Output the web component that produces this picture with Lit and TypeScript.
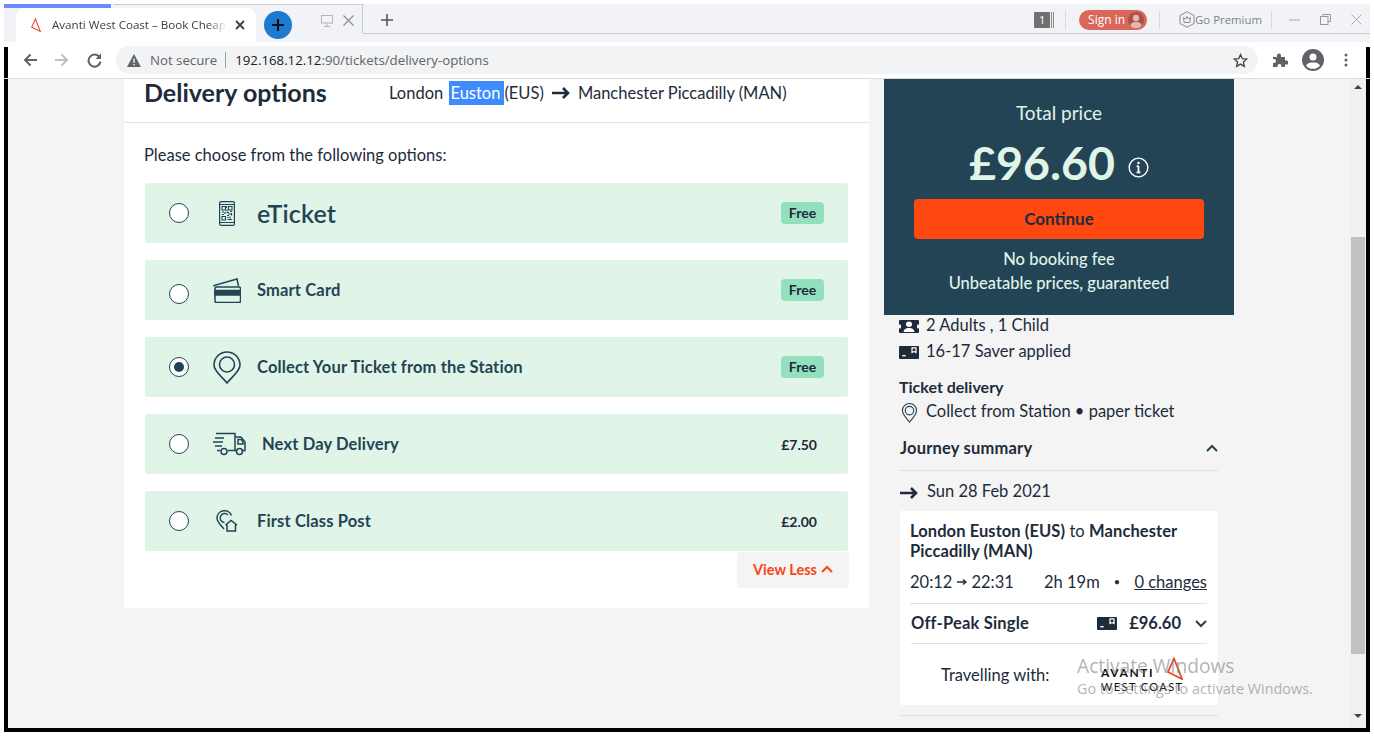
import { LitElement, css, html } from 'lit';
import { customElement } from 'lit/decorators.js';

const triangle = (w: number, h: number) => html`<svg width=${w} height=${h} viewBox="0 0 16 23" fill="none" stroke="#e5492f" stroke-width="1.8"><path d="M7 1.5L15 22L1 15Z" /></svg>`;

const chevron = (up: boolean, color: string) => html`<svg width="12" height="8" viewBox="0 0 12 8" fill="none" stroke=${color} stroke-width="2"><path d=${up ? 'M1 7L6 2L11 7' : 'M1 1L6 6L11 1'} /></svg>`;

const arrow = html`<svg width="18" height="12" viewBox="0 0 18 12" fill="none" stroke="#1d2b3a" stroke-width="2.6"><path d="M0 6H16M11 1L16 6L11 11" /></svg>`;

const adultsIcon = html`<svg width="20" height="13" viewBox="0 0 20 14" preserveAspectRatio="none"><rect width="20" height="14" rx="1" fill="#1d2b3a" /><circle cx="10" cy="4.5" r="3" fill="#fff" /><path d="M4.5 13C5 9.5 7 8.5 10 8.5S15 9.5 15.5 13Z" fill="#fff" /><rect x="0" y="5" width="2" height="4" fill="#f4f4f4" /><rect x="18" y="5" width="2" height="4" fill="#f4f4f4" /></svg>`;

const saverIcon = html`<svg width="20" height="13" viewBox="0 0 20 14" preserveAspectRatio="none"><rect width="20" height="14" rx="1" fill="#1d2b3a" /><path d="M13 2H17V7L15 6L13 7Z" fill="none" stroke="#fff" stroke-width="1.2" /><path d="M3 10.5H7M5 9.5V11.5" stroke="#fff" stroke-width="1" /></svg>`;

const pinSmall = html`<svg width="17" height="21" viewBox="0 0 18 22" fill="none" stroke="#224455" stroke-width="1.2"><path d="M9 21C6 17 1.5 13.5 1.5 9a7.5 7.5 0 0 1 15 0C16.5 13.5 12 17 9 21Z" /><circle cx="9" cy="9" r="4.5" /></svg>`;

const phoneIcon = html`<svg width="16" height="25" viewBox="0 0 16 25" fill="none" stroke="#224455"><rect x=".6" y=".6" width="14.8" height="23.8" rx="1.5" stroke-width="1.2" /><path d="M1 3.5H15M1 21.5H15" stroke-width="1" /><path d="M3 5.5H6.5V9H3ZM9.5 5.5H13V9H9.5ZM3 15.5H6.5V19H3Z" stroke-width="1.1" /><path d="M7.5 5V7M8 8.5V10.5M3 11H5M6 11V13M3 13.5H5M7.5 11.5H10M11 10.5H13M9 13H12M12.5 12V14.5M8 14.5H10M8 16.5H9.5M11 15.5V17.5M8.5 18.5H13" stroke-width="1.2" /></svg>`;

const cardIcon = html`<svg width="28" height="25" viewBox="0 0 28 25" fill="none" stroke="#224455" stroke-width="1.5"><path d="M1 8.5L1 7.5L24 1L25.5 8" /><rect x="2" y="9" width="25.5" height="15.5" rx="1.5" /><rect x="2" y="12.5" width="25.5" height="4.5" fill="#224455" /></svg>`;

const pinIcon = html`<svg width="28" height="33" viewBox="0 0 28 33" fill="none" stroke="#224455" stroke-width="1.6"><path d="M14 32C9.5 26 1 20.5 1 14a13 13 0 0 1 26 0C27 20.5 18.5 26 14 32Z" /><circle cx="14" cy="13.5" r="7.5" /></svg>`;

const truckIcon = html`<svg width="33" height="24" viewBox="0 0 33 24" fill="none" stroke="#224455" stroke-width="1.5"><path d="M3 1.5H22V18.5H15M7 18.5H4M22 5H28L32 10V18.5H28.5M22 18.5H24" /><path d="M25 7.5H28.5L30 10V12H25Z" /><circle cx="11" cy="19.5" r="3" /><circle cx="26.5" cy="19.5" r="3" /><path d="M2 6H11M0 10H10M2 14H9" /></svg>`;

const postIcon = html`<svg width="22" height="22" viewBox="0 0 22 22" fill="none" stroke="#224455" stroke-width="1.5"><path d="M8 19C5 15.5 1 12 1 8a7.5 7.5 0 0 1 14.5-2.5" /><path d="M8.5 12.5A4.5 4.5 0 1 1 12 5" /><path d="M9.5 15L15 10.5L21 15M11 14V21H19.5V14" /></svg>`;

const options = [
    { name: 'eTicket', icon: phoneIcon, price: 'Free', large: true },
    { name: 'Smart Card', icon: cardIcon, price: 'Free', low: true },
    { name: 'Collect Your Ticket from the Station', icon: pinIcon, price: 'Free', selected: true },
    { name: 'Next Day Delivery', icon: truckIcon, price: '£7.50' },
    { name: 'First Class Post', icon: postIcon, price: '£2.00' },
];

@customElement('app-root')
export class AppRoot extends LitElement {
    static styles = css`
        :host {
            display: block;
            position: relative;
            width: 1374px;
            height: 736px;
            overflow: hidden;
            background: #fff;
            font-family: Lato, sans-serif;
            color: #1d2b3a;
            font-size: 16.5px;
        }

        .window {
            display: flex;
            flex-direction: column;
            margin: 4px 4px 0;
            height: 728px;
        }

        /* tab strip */
        .strip {
            display: flex;
            height: 38px;
            flex: none;
            padding-top: 4px;
            box-sizing: border-box;
            font-family: 'Open Sans', sans-serif;
            background:
                linear-gradient(#6b8cff, #6b8cff) 0 0 / 107px 4px no-repeat,
                linear-gradient(#c8ccd4, #c8ccd4) 110px 0 / 250px 1px no-repeat,
                linear-gradient(#c8ccd4, #c8ccd4) 359px 29px / 100% 1px no-repeat,
                #f1f3f6;
        }

        .tab {
            width: 240px;
            height: 34px;
            margin-left: 12px;
            display: flex;
            align-items: center;
            flex: none;
            box-sizing: border-box;
            padding: 0 11px 0 15px;
            background: #fff;
            border-radius: 9px 9px 0 0;
        }

        .tab-title {
            width: 174px;
            margin-left: 11px;
            padding-bottom: 2px;
            font-size: 11.6px;
            color: #3c4043;
            white-space: nowrap;
            overflow: hidden;
            -webkit-mask-image: linear-gradient(90deg, #000 90%, transparent);
            mask-image: linear-gradient(90deg, #000 90%, transparent);
        }

        .tab-close {
            margin-left: auto;
        }

        .new-tab {
            width: 28px;
            height: 28px;
            margin: 3px 0 0 8px;
            border-radius: 50%;
            background: #1a7bd0;
            display: flex;
            align-items: center;
            justify-content: center;
            flex: none;
        }

        .tab-rest {
            width: 71px;
            height: 29px;
            margin-top: -4px;
            box-sizing: border-box;
            border-right: 1px solid #c8ccd4;
            display: flex;
            align-items: center;
            gap: 10px;
            padding: 4px 0 0 29px;
            flex: none;
        }

        .add-tab {
            margin: 5px 0 0 17px;
            height: 14px;
            flex: none;
        }

        .strip-right {
            margin-left: auto;
            margin-top: -3px;
            height: 29px;
            display: flex;
            align-items: center;
            padding-right: 8px;
            color: #85898f;
            font-size: 12px;
        }

        .count {
            display: flex;
            align-items: center;
            gap: 1px;
        }

        .count b {
            width: 16px;
            height: 16px;
            background: #707070;
            color: #fff;
            font-weight: 400;
            font-size: 11px;
            line-height: 16px;
            text-align: center;
            border-radius: 1px;
        }

        .count i {
            width: 4px;
            height: 16px;
            background: repeating-linear-gradient(90deg, #8a8a8a 0 1px, transparent 1px 2px);
        }

        .sep {
            width: 1px;
            height: 18px;
            background: #d8dade;
        }

        .sep.first {
            margin-left: 10px;
        }

        .sign-in {
            width: 68px;
            height: 20px;
            margin: 0 12px 0 13px;
            box-sizing: border-box;
            padding-left: 9px;
            background: #d9675a;
            border-radius: 10px;
            color: #fff;
            font-size: 12px;
            display: flex;
            align-items: center;
            justify-content: space-between;
            padding-right: 3px;
        }

        .premium {
            display: flex;
            align-items: center;
            margin: 0 9px 0 19px;
            font-size: 11.4px;
            white-space: nowrap;
            color: #7f8388;
        }

        .win-controls {
            display: flex;
            align-items: center;
            gap: 20px;
            margin-left: 17px;
        }

        /* toolbar */
        .toolbar {
            flex: none;
            height: 37px;
            box-sizing: border-box;
            display: flex;
            align-items: center;
            padding: 0 4px 0 19px;
            font-family: 'Open Sans', sans-serif;
            border-bottom: 1px solid #dcdde0;
            background:
                linear-gradient(#fff 5px, #000 5px) left / 4px 100% no-repeat,
                linear-gradient(#fff 5px, #000 5px) right / 4px 100% no-repeat,
                #fff;
        }

        .nav {
            display: flex;
            align-items: center;
            gap: 18px;
            width: 93px;
            flex: none;
        }

        .omnibox {
            width: 1142px;
            height: 28px;
            flex: none;
            display: flex;
            align-items: center;
            box-sizing: border-box;
            padding: 0 10px 0 11px;
            background: #f1f3f4;
            border-radius: 14px;
            font-size: 13.25px;
            color: #5f6368;
        }

        .not-secure {
            margin-left: 9px;
            white-space: nowrap;
        }

        .omni-sep {
            width: 1px;
            height: 16px;
            margin: 0 9px 0 8px;
            background: #9aa0a6;
        }

        .url {
            color: #202124;
            white-space: nowrap;
        }

        .url span {
            color: #5f6368;
        }

        .star {
            margin-left: auto;
        }

        .tools {
            display: flex;
            align-items: center;
            margin-left: 14px;
        }

        .tools svg + svg {
            margin-left: 14px;
        }

        .tools svg:last-child {
            margin-left: 20px;
        }

        /* page */
        .viewport {
            flex: 1;
            min-height: 0;
            display: flex;
            border-left: 4px solid #000;
            border-right: 4px solid #000;
            border-bottom: 4px solid #000;
            background: #f4f4f4;
            position: relative;
        }

        .card {
            width: 745px;
            height: 529px;
            margin-left: 116px;
            background: #fff;
            flex: none;
            box-sizing: border-box;
        }

        .card-head {
            height: 44px;
            box-sizing: border-box;
            display: flex;
            align-items: center;
            padding: 0 0 16px 20px;
            border-bottom: 1px solid #e4e4e4;
        }

        h1 {
            margin: 0 0 2px;
            width: 245px;
            flex: none;
            font-size: 25px;
            line-height: 28px;
            font-weight: 700;
        }

        .route {
            display: flex;
            align-items: center;
            white-space: nowrap;
        }

        .route mark {
            background: #3d8bfd;
            color: #fff;
            padding: 0 4px 0 1px;
            margin-left: 2px;
            line-height: 24px;
        }

        .route svg {
            margin: 0 8px;
        }

        .intro {
            margin: 22px 0 0 20px;
            line-height: 20px;
        }

        .options {
            display: flex;
            flex-direction: column;
            gap: 17px;
            margin: 18px 0 0 21px;
            width: 703px;
        }

        .option {
            height: 60px;
            display: flex;
            align-items: center;
            box-sizing: border-box;
            padding: 0 24px;
            background: #e0f4e8;
            border-radius: 2px;
        }

        .radio {
            width: 20px;
            height: 20px;
            flex: none;
            box-sizing: border-box;
            border: 1px solid #224455;
            border-radius: 50%;
            background: #fff;
            display: flex;
            align-items: center;
            justify-content: center;
        }

        .radio.low {
            margin-top: 8px;
        }

        .radio.on::after {
            content: '';
            width: 10px;
            height: 10px;
            border-radius: 50%;
            background: #224455;
        }

        .icon {
            min-width: 28px;
            margin: 0 16px 0 24px;
            display: flex;
            justify-content: center;
            flex: none;
        }

        .name {
            font-weight: 700;
            color: #224455;
            letter-spacing: 0.15px;
        }

        .name.large {
            font-size: 25px;
            font-weight: 600;
        }

        .badge {
            margin-left: auto;
            width: 43px;
            height: 22px;
            border-radius: 4px;
            background: #94dfbe;
            font-size: 14px;
            font-weight: 700;
            line-height: 22px;
            text-align: center;
        }

        .price {
            margin-left: auto;
            margin-right: 7px;
            font-size: 14px;
            font-weight: 700;
        }

        .more {
            width: 112px;
            height: 36px;
            margin: 1px 0 0 613px;
            box-sizing: border-box;
            padding-bottom: 2px;
            border-radius: 4px;
            background: #f4f4f4;
            display: flex;
            align-items: center;
            justify-content: center;
            gap: 4px;
            font-size: 14.5px;
            font-weight: 700;
            color: #fa4518;
        }

        /* right column */
        .side {
            width: 350px;
            margin-left: 15px;
            flex: none;
        }

        .panel {
            height: 236px;
            box-sizing: border-box;
            padding: 22px 30px 0;
            background: #224455;
            color: #e0f4e8;
            text-align: center;
        }

        .total {
            font-size: 19px;
            line-height: 24px;
        }

        .amount {
            margin-top: 13px;
            height: 50px;
            box-sizing: border-box;
            padding-bottom: 2px;
            display: flex;
            align-items: center;
            justify-content: center;
            gap: 13px;
            font-size: 46.5px;
            font-weight: 700;
        }

        .amount svg {
            margin-top: 11px;
        }

        .continue {
            height: 40px;
            margin-top: 11px;
            border-radius: 4px;
            background: #ff4710;
            color: #1d2b3a;
            font-size: 17px;
            font-weight: 700;
            line-height: 40px;
        }

        .perks {
            margin-top: 8px;
            line-height: 24px;
            font-weight: 500;
        }

        .details {
            padding: 0 16px;
        }

        .info {
            margin-left: -1px;
        }

        .line {
            display: flex;
            align-items: center;
            gap: 7px;
            height: 20px;
            white-space: nowrap;
        }

        .line + .line {
            margin-top: 6px;
        }

        .info-icon {
            width: 20px;
            display: flex;
            justify-content: center;
            flex: none;
            margin-top: 2px;
        }

        .label {
            margin-top: 16px;
            font-size: 16px;
            line-height: 20px;
            font-weight: 700;
        }

        .line.delivery {
            margin-top: 4px;
        }

        .summary {
            margin-top: 17px;
            padding-bottom: 12px;
            border-bottom: 1px solid #e0e0e0;
            display: flex;
            justify-content: space-between;
            align-items: center;
            line-height: 20px;
            font-weight: 700;
            letter-spacing: 0.2px;
        }

        .date {
            margin-top: 10px;
            height: 20px;
            display: flex;
            align-items: center;
            gap: 9px;
        }

        .date svg {
            margin-top: 3px;
        }

        .journey {
            margin-top: 10px;
            height: 194px;
            box-sizing: border-box;
            padding: 10px 11px 0 10px;
            background: #fff;
        }

        .stations {
            line-height: 20px;
            letter-spacing: 0.08px;
        }

        .times {
            margin-top: 11px;
            padding-bottom: 11px;
            border-bottom: 1px solid #e0e0e0;
            height: 20px;
            line-height: 20px;
            display: flex;
            align-items: center;
            white-space: nowrap;
        }

        .times u {
            margin-left: auto;
        }

        .clock {
            width: 134px;
            display: flex;
            align-items: center;
            flex: none;
        }

        .clock svg {
            margin: 0 4px 0 5px;
        }

        .dot {
            margin-left: 14px;
            font-size: 11px;
        }

        .ticket {
            height: 40px;
            margin-left: 1px;
            box-sizing: border-box;
            border-bottom: 1px solid #e0e0e0;
            display: flex;
            align-items: center;
            font-weight: 700;
        }

        .ticket .type {
            flex: 1;
            letter-spacing: 0.2px;
            padding-bottom: 1px;
        }

        .ticket svg:last-child {
            margin-left: 14px;
        }

        .ticket .fare {
            margin-left: 12px;
            padding-bottom: 1px;
        }

        .travel {
            height: 60px;
            display: flex;
            align-items: center;
            padding: 0 0 0 31px;
            white-space: nowrap;
        }

        .travel-label {
            width: 160px;
            padding-top: 2px;
            flex: none;
        }

        .logo {
            display: flex;
            flex-direction: column;
            width: 82px;
            color: #111;
        }

        .logo-top {
            display: flex;
            justify-content: space-between;
            align-items: flex-end;
            height: 26px;
            font-size: 12px;
            font-weight: 700;
            letter-spacing: 1.6px;
            line-height: 14px;
        }

        .logo-bottom {
            font-size: 11px;
            letter-spacing: 1.4px;
            line-height: 14px;
        }

        .bottom-rule {
            margin-top: 10px;
            height: 1px;
            background: #e0e0e0;
        }

        .scrollbar {
            width: 16px;
            margin-left: auto;
            display: flex;
            flex-direction: column;
            align-items: center;
            background: #f1f1f1;
            flex: none;
        }

        .thumb {
            width: 14px;
            height: 417px;
            margin-top: 148px;
            background: #c1c1c1;
        }

        .arrow-up,
        .arrow-down {
            width: 0;
            height: 0;
            border-left: 4px solid transparent;
            border-right: 4px solid transparent;
        }

        .arrow-up {
            margin-top: 6px;
            border-bottom: 4px solid #444;
        }

        .arrow-down {
            margin-top: 60px;
            border-top: 4px solid #444;
        }

        .watermark {
            position: absolute;
            left: 1069px;
            top: 574px;
            font-family: 'Open Sans', sans-serif;
            color: rgba(130, 130, 130, 0.62);
            white-space: nowrap;
        }

        .watermark div:first-child {
            font-size: 19.2px;
            line-height: 26px;
        }

        .watermark div:last-child {
            font-size: 14.4px;
            line-height: 20px;
        }
    `;

    renderStrip() {
        return html`
            <div class="strip">
                <div class="tab">
                    ${triangle(10, 14)}
                    <div class="tab-title">Avanti West Coast – Book Cheap</div>
                    <svg class="tab-close" width="10" height="10" viewBox="0 0 10 10" stroke="#3c4043" stroke-width="1.8"><path d="M1 1L9 9M9 1L1 9" /></svg>
                </div>
                <div class="new-tab">
                    <svg width="14" height="14" viewBox="0 0 14 14" stroke="#111" stroke-width="2"><path d="M7 1V13M1 7H13" /></svg>
                </div>
                <div class="tab-rest">
                    <svg width="12" height="12" viewBox="0 0 12 12" fill="none" stroke="#b5b5b5"><rect x=".5" y=".5" width="11" height="7.5" /><path d="M6 8V11M3 11.5H9" /></svg>
                    <svg width="11" height="11" viewBox="0 0 11 11" stroke="#8a8a8a" stroke-width="1.1"><path d="M.5 .5L10.5 10.5M10.5 .5L.5 10.5" /></svg>
                </div>
                <svg class="add-tab" width="14" height="14" viewBox="0 0 14 14" stroke="#555" stroke-width="1.6"><path d="M7 1V13M1 7H13" /></svg>
                <div class="strip-right">
                    <div class="count"><b>1</b><i></i></div>
                    <div class="sep first"></div>
                    <div class="sign-in">
                        Sign in
                        <svg width="16" height="16" viewBox="0 0 16 16"><circle cx="8" cy="8" r="8" fill="#a5534c" /><circle cx="8" cy="6" r="3.2" fill="#e8b7b0" /><path d="M2.5 14C3 10.5 5 10 8 10S13 10.5 13.5 14A8 8 0 0 1 2.5 14Z" fill="#e8b7b0" /></svg>
                    </div>
                    <div class="sep"></div>
                    <div class="premium">
                        <svg width="16" height="17" viewBox="0 0 16 17" fill="none" stroke="#85898f"><path d="M8 .8L15 4.5V12.5L8 16.2L1 12.5V4.5Z" /><path d="M4.5 6.5L6.5 8L8 5.5L9.5 8L11.5 6.5L10.8 11.5H5.2Z" /></svg>
                        Go Premium
                    </div>
                    <div class="sep"></div>
                    <div class="win-controls">
                        <svg width="11" height="2" viewBox="0 0 11 2" stroke="#aaa"><path d="M0 1H11" /></svg>
                        <svg width="11" height="11" viewBox="0 0 11 11" fill="none" stroke="#999"><path d="M3 2.5V.5H10.5V7.5H8" /><rect x=".5" y="2.5" width="7.5" height="8" /></svg>
                        <svg width="11" height="11" viewBox="0 0 11 11" stroke="#aaa"><path d="M.5 .5L10.5 10.5M10.5 .5L.5 10.5" /></svg>
                    </div>
                </div>
            </div>
        `;
    }

    renderToolbar() {
        return html`
            <div class="toolbar">
                <div class="nav">
                    <svg width="14" height="14" viewBox="0 0 14 14" fill="none" stroke="#5f6368" stroke-width="2"><path d="M14 7H2M7.5 1.5L2 7L7.5 12.5" /></svg>
                    <svg width="14" height="14" viewBox="0 0 14 14" fill="none" stroke="#bdc1c6" stroke-width="2"><path d="M0 7H12M6.5 1.5L12 7L6.5 12.5" /></svg>
                    <svg width="15" height="15" viewBox="0 0 15 15" fill="none" stroke="#5f6368" stroke-width="2"><path d="M12.5 4.2A6 6 0 1 0 13.5 8.5" /><path d="M14 .5V6H8.5Z" fill="#5f6368" stroke="none" /></svg>
                </div>
                <div class="omnibox">
                    <svg width="14" height="13" viewBox="0 0 14 13"><path d="M7 0L14 13H0Z" fill="#5f6368" /><path d="M7 4.5V9M7 10V11.5" stroke="#f1f3f4" stroke-width="1.4" /></svg>
                    <span class="not-secure">Not secure</span>
                    <span class="omni-sep"></span>
                    <span class="url">192.168.12.12<span>:90/tickets/delivery-options</span></span>
                    <svg class="star" width="15" height="15" viewBox="0 0 15 15" fill="none" stroke="#444" stroke-width="1.3"><path d="M7.5 1.5L9.3 5.6L13.8 6L10.4 9L11.4 13.4L7.5 11.1L3.6 13.4L4.6 9L1.2 6L5.7 5.6Z" /></svg>
                </div>
                <div class="tools">
                    <svg width="16" height="16" viewBox="0 0 16 16" fill="#5f6368"><path d="M1 5H5V3.5a2 2 0 0 1 4 0V5H13V8.5H14.5a2 2 0 0 1 0 4H13V15H9.5V14a2 2 0 0 0-4 0V15H1V11H2a2 2 0 0 0 0-4H1Z" /></svg>
                    <svg width="22" height="22" viewBox="0 0 22 22"><circle cx="11" cy="11" r="11" fill="#5f6368" /><circle cx="11" cy="8" r="3.5" fill="#fff" /><path d="M4 16.5C5.5 14 8 13.5 11 13.5S16.5 14 18 16.5A9 9 0 0 1 4 16.5Z" fill="#fff" /></svg>
                    <svg width="4" height="14" viewBox="0 0 4 14" fill="#5f6368"><circle cx="2" cy="2" r="1.5" /><circle cx="2" cy="7" r="1.5" /><circle cx="2" cy="12" r="1.5" /></svg>
                </div>
            </div>
        `;
    }

    renderCard() {
        return html`
            <section class="card">
                <div class="card-head">
                    <h1>Delivery options</h1>
                    <div class="route">
                        London&nbsp;<mark>Euston</mark>(EUS)${arrow}Manchester Piccadilly (MAN)
                    </div>
                </div>
                <div class="intro">Please choose from the following options:</div>
                <div class="options">
                    ${options.map(
                        (o) => html`
                            <div class="option">
                                <span class="radio ${o.selected ? 'on' : ''} ${o.low ? 'low' : ''}"></span>
                                <span class="icon">${o.icon}</span>
                                <span class="name ${o.large ? 'large' : ''}">${o.name}</span>
                                ${o.price === 'Free'
                                    ? html`<span class="badge">Free</span>`
                                    : html`<span class="price">${o.price}</span>`}
                            </div>
                        `,
                    )}
                </div>
                <div class="more">View Less ${chevron(true, '#fa4518')}</div>
            </section>
        `;
    }

    renderSide() {
        return html`
            <aside class="side">
                <div class="panel">
                    <div class="total">Total price</div>
                    <div class="amount">
                        £96.60
                        <svg width="21" height="21" viewBox="0 0 22 22" fill="none" stroke="#fff" stroke-width="1.5"><circle cx="11" cy="11" r="9.8" /><path d="M11 9.5V16M9 16H13M9 9.5H11" stroke-width="1.8" /><circle cx="11" cy="6.3" r="1.3" fill="#fff" stroke="none" /></svg>
                    </div>
                    <div class="continue">Continue</div>
                    <div class="perks">No booking fee<br />Unbeatable prices, guaranteed</div>
                </div>
                <div class="details">
                    <div class="info">
                        <div class="line"><span class="info-icon">${adultsIcon}</span>2 Adults , 1 Child</div>
                        <div class="line"><span class="info-icon">${saverIcon}</span>16-17 Saver applied</div>
                        <div class="label">Ticket delivery</div>
                        <div class="line delivery"><span class="info-icon">${pinSmall}</span>Collect from Station • paper ticket</div>
                    </div>
                    <div class="summary">Journey summary ${chevron(true, '#224455')}</div>
                    <div class="date">${arrow}<span>Sun 28 Feb 2021</span></div>
                    <div class="journey">
                        <div class="stations"><b>London Euston (EUS)</b> to <b>Manchester Piccadilly (MAN)</b></div>
                        <div class="times">
                            <span class="clock">20:12<svg width="10" height="8" viewBox="0 0 10 8" fill="none" stroke="#1d2b3a" stroke-width="1.4"><path d="M0 4H9M6 1.5L9 4L6 6.5" /></svg>22:31</span>
                            <span>2h 19m</span>
                            <span class="dot">•</span>
                            <u>0 changes</u>
                        </div>
                        <div class="ticket">
                            <span class="type">Off-Peak Single</span>
                            ${saverIcon}
                            <span class="fare">£96.60</span>
                            ${chevron(false, '#224455')}
                        </div>
                        <div class="travel">
                            <span class="travel-label">Travelling with:</span>
                            <div class="logo">
                                <div class="logo-top"><span>AVANTI</span>${triangle(16, 23)}</div>
                                <div class="logo-bottom">WEST COAST</div>
                            </div>
                        </div>
                    </div>
                    <div class="bottom-rule"></div>
                </div>
            </aside>
        `;
    }

    render() {
        return html`
            <div class="window">
                ${this.renderStrip()} ${this.renderToolbar()}
                <div class="viewport">
                    ${this.renderCard()} ${this.renderSide()}
                    <div class="scrollbar">
                        <div class="arrow-up"></div>
                        <div class="thumb"></div>
                        <div class="arrow-down"></div>
                    </div>
                    <div class="watermark">
                        <div>Activate Windows</div>
                        <div>Go to Settings to activate Windows.</div>
                    </div>
                </div>
            </div>
        `;
    }
}
